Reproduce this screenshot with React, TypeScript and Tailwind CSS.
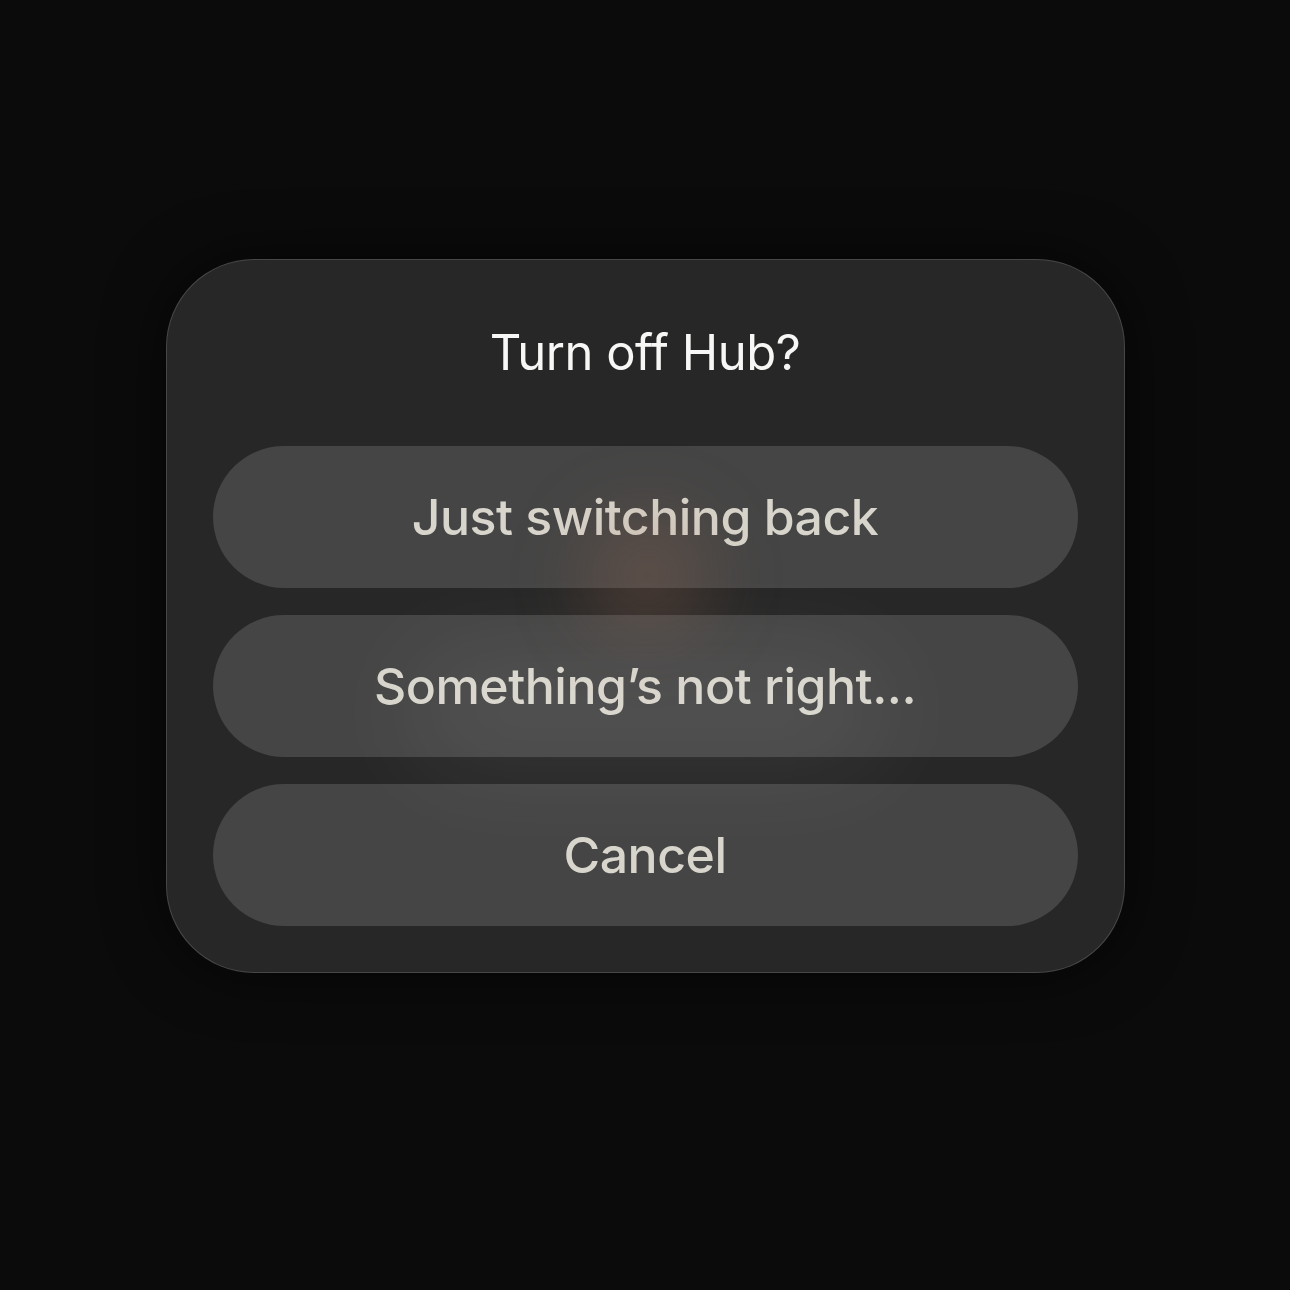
const choices = ["Just switching back", "Something’s not right...", "Cancel"]

export default function App() {
  return (
    <div className="min-h-[1290px] w-full bg-[#0b0b0b] pt-[259px] font-['Inter','Noto_Sans',sans-serif]">
      <div className="relative mx-auto w-[959px] overflow-hidden rounded-[88px] border border-white/15 bg-[#272727] px-[46px] pb-[46px] shadow-[0_0_60px_rgba(0,0,0,0.6)]">
        <h2 className="flex h-[186px] items-center justify-center text-[49px] font-normal tracking-[-0.01em] text-[#f7f7f5]">
          Turn off Hub?
        </h2>

        <div className="flex flex-col gap-[27px]">
          {choices.map((label) => (
            <button
              key={label}
              className="flex h-[142px] w-full items-center justify-center rounded-full bg-[#454545] text-[50px] font-medium tracking-[-0.01em] text-[#d8d5cc]"
            >
              {label}
            </button>
          ))}
        </div>

        {/* soft light bleeding through the glass */}
        <div className="pointer-events-none absolute left-[420px] top-[260px] h-[110px] w-[120px] rounded-full bg-[#a06a50]/30 blur-[38px]" />
        <div className="pointer-events-none absolute left-[240px] top-[390px] h-[120px] w-[480px] rounded-full bg-white/[0.07] blur-[50px]" />
      </div>
    </div>
  )
}
